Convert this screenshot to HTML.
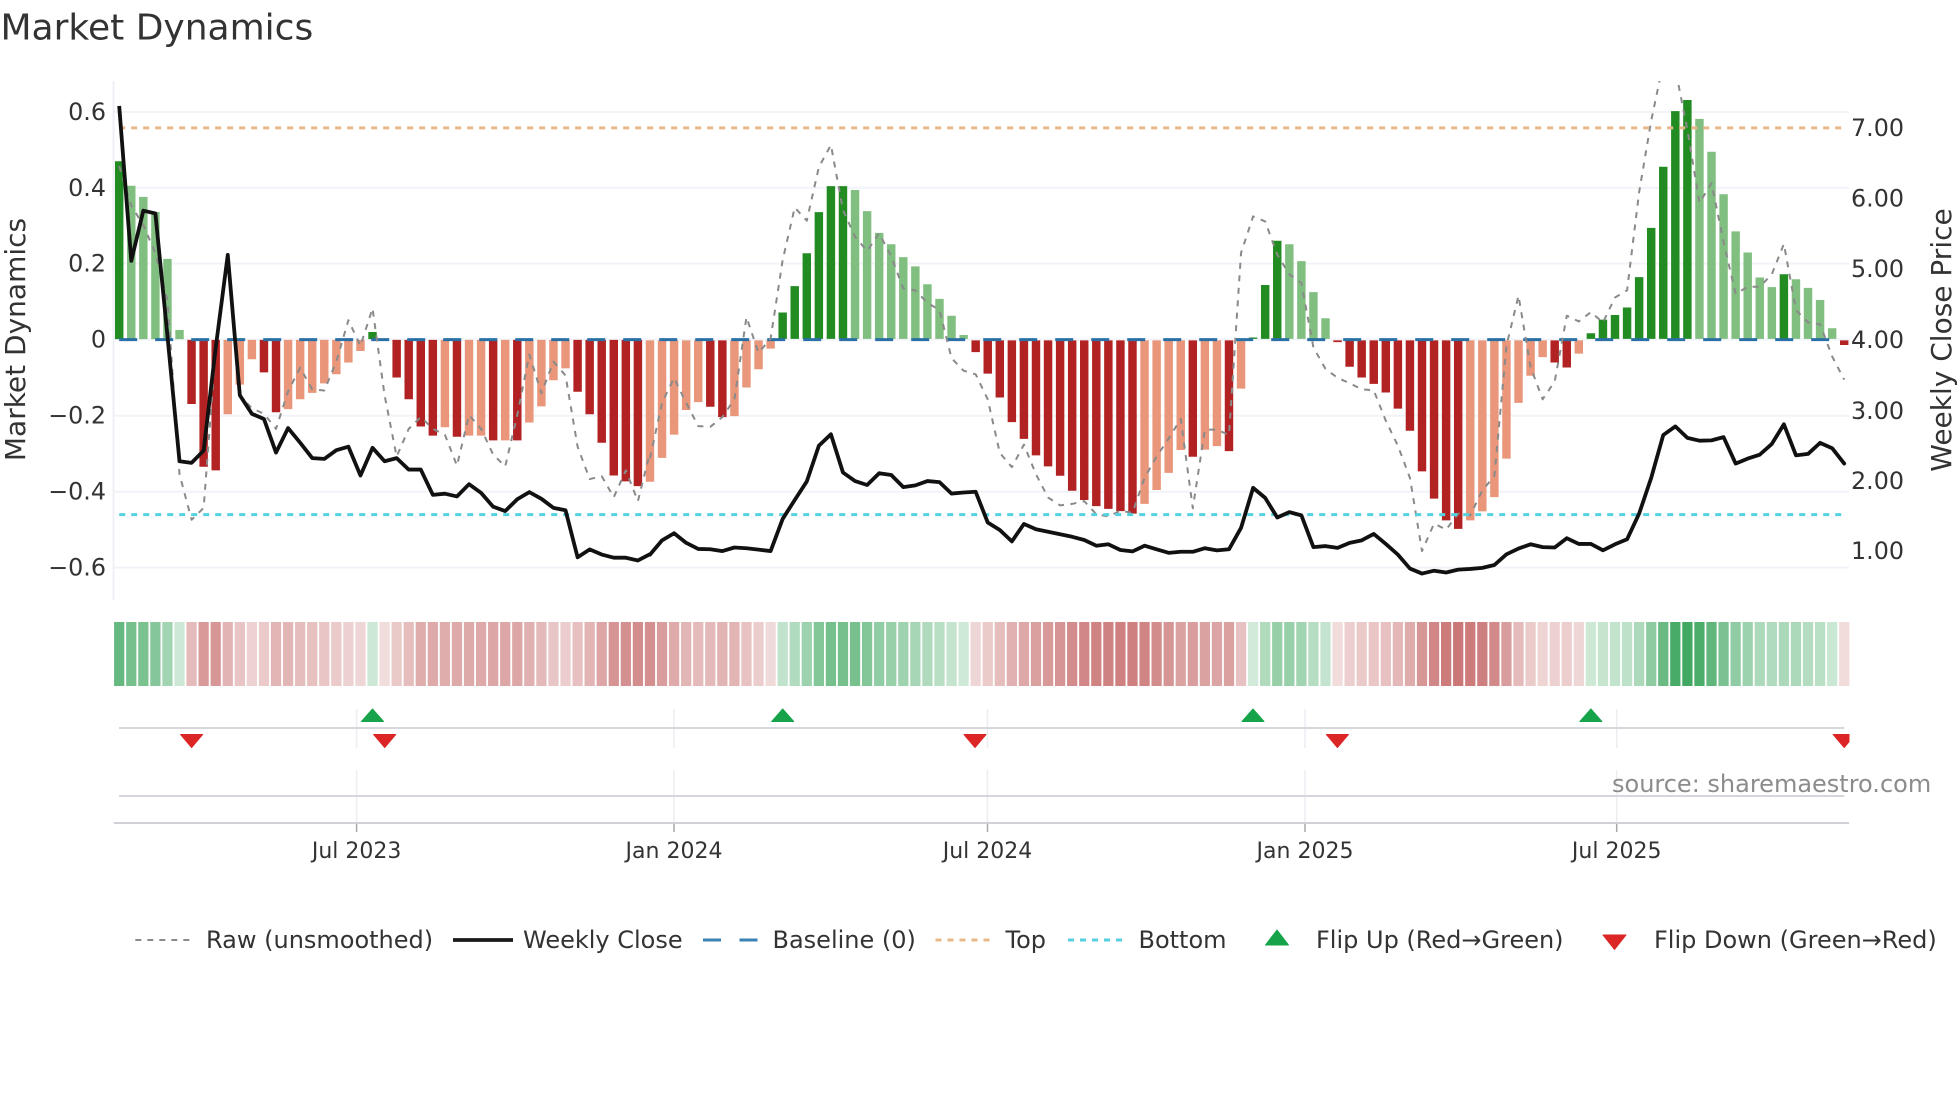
<!DOCTYPE html>
<html lang="en"><head><meta charset="utf-8"><title>Market Dynamics</title>
<style>
html,body{margin:0;padding:0;background:#fff}
svg{display:block}
text{font-family:"DejaVu Sans","Liberation Sans",sans-serif;fill:#333}
.ly{font-size:23.8px;text-anchor:end}
.ry{font-size:23.8px}
.xt{font-size:22px;text-anchor:middle}
.lg{font-size:24px}
.ns{vector-effect:non-scaling-stroke;fill:none;stroke-linejoin:round}
.g{stroke:#1a9641}.r{stroke:#a81c1c}
</style></head><body>
<svg width="1960" height="1102" viewBox="0 0 1960 1102" xmlns="http://www.w3.org/2000/svg">
<defs>
<clipPath id="c"><rect x="113" y="81" width="1737" height="520"/></clipPath>
<clipPath id="m"><rect x="113" y="700" width="1736.5" height="60"/></clipPath>
</defs>
<rect width="1960" height="1102" fill="#fff"/>
<text x="0.5" y="39.5" font-size="36">Market Dynamics</text>

<!-- grid -->
<g stroke="#f1f3f8" stroke-width="2">
<path d="M113 112H1849M113 187.7H1849M113 263.6H1849M113 339.5H1849M113 415.8H1849M113 491.7H1849M113 567.6H1849"/>
</g>
<path d="M113.5 81V600" stroke="#eef0f5" stroke-width="2"/>

<!-- bars -->
<g transform="translate(119.2 0) scale(12.063 .39526)" stroke-width=".7" fill="none">
<path stroke="#228b22" d="M0 858V408M21 858V840"/>
<path stroke="#81bf81" d="M1 858V470M2 858V498M3 858V536M4 858V655M5 858V835"/>
<path stroke="#b22222" d="M6 860V1022M7 860V1181M8 860V1190M12 860V942M13 860V1043M23 860V955M24 860V1010M25 860V1079M26 860V1102M28 860V1105M31 860V1114M33 860V1114M38 860V991M39 860V1048M40 860V1120M41 860V1203M42 860V1218M43 860V1230"/>
<path stroke="#e9967a" d="M9 860V1048M10 860V973M11 860V909M14 860V1035M15 860V1010M16 860V994M17 860V970M18 860V947M19 860V917M20 860V888M27 860V1081M29 860V1102M30 860V1102M32 860V1114M34 860V1069M35 860V1028M36 860V962M37 860V932"/>
</g>
<g transform="translate(119.2 60) scale(12.063 .35714)" stroke-width=".7" fill="none">
<path stroke="#e9967a" d="M44 785V1181M45 785V1114M46 785V1049M47 785V980M48 785V958M51 785V997M52 785V917M53 785V866M54 785V808M85 785V1243M86 785V1204M87 785V1156M88 785V1092M90 785V1091M91 785V1081M93 785V920M112 785V1289M113 785V1264M114 785V1224M115 785V1116M116 785V960M117 785V884M118 785V832M121 785V822"/>
<path stroke="#b22222" d="M49 785V971M50 785V1000M71 785V818M72 785V878M73 785V945M74 785V1014M75 785V1061M76 785V1107M77 785V1138M78 785V1164M79 785V1206M80 785V1232M81 785V1249M82 785V1257M83 785V1263M84 785V1270M89 785V1111M92 785V1095M101 785V790M102 785V859M103 785V889M104 785V907M105 785V931M106 785V976M107 785V1038M108 785V1152M109 785V1228M110 785V1289M111 785V1313M119 785V847M120 785V861M143 785V798"/>
<path stroke="#228b22" d="M55 781V707M56 781V633M57 781V541M58 781V426M59 781V353M60 781V353M94 781V777M95 781V630M96 781V506M122 781V765M123 781V727M124 781V714M125 781V693M126 781V608M127 781V470M128 781V299M129 781V143M130 781V112M138 781V600"/>
<path stroke="#81bf81" d="M61 781V364M62 781V423M63 781V484M64 781V516M65 781V552M66 781V578M67 781V628M68 781V669M69 781V716M70 781V770M97 781V516M98 781V563M99 781V650M100 781V723M131 781V165M132 781V257M133 781V376M134 781V480M135 781V539M136 781V609M137 781V636M139 781V614M140 781V638M141 781V672M142 781V751"/>
</g>

<!-- baseline -->
<path d="M119.2 339.6H1844" stroke="#2a70a5" stroke-width="3" stroke-dasharray="18 18" fill="none"/>

<g clip-path="url(#c)">
<!-- raw -->
<g stroke="#8a8a8a" stroke-width="2" stroke-dasharray="6 6.5">
<polyline class="ns" transform="translate(119.2 0) scale(12.063 .39526)" points="0,420 1,520 2,570 3,640 4,760 5,1200 6,1315 7,1285 8,880 9,645 10,1000 11,1033 12,1047 13,1085 14,990 15,930 16,985 17,988 18,915 19,810 20,875 21,780 22,1000 23,1155 24,1085 25,1055 26,1085 27,1100 28,1178 29,1050 30,1085 31,1150 32,1180 33,1050 34,897 35,995 36,915 37,950 38,1130 39,1212 40,1205 41,1258 42,1190 43,1268 44,1145"/>
<polyline class="ns" transform="translate(119.2 60) scale(12.063 .35714)" points="44,1115 45,960 46,890 47,960 48,1025 49,1027 50,1000 51,950 52,720 53,820 54,780 55,560 56,413 57,450 58,300 59,238 60,420 61,495 62,535 63,485 64,550 65,640 66,645 67,680 68,700 69,835 70,870 71,880 72,950 73,1100 74,1140 75,1077 76,1160 77,1225 78,1247 79,1243 80,1235 81,1272 82,1278 83,1262 84,1268 85,1170 86,1110 87,1060 88,1005 89,1255 90,1035 91,1035 92,1050 93,540 94,438 95,452 96,545 97,600 98,625 99,805 100,865 101,890 102,905 103,922 104,925 105,1010 106,1080 107,1170 108,1375 109,1298 110,1315 111,1270 112,1275 113,1205 114,1165 115,800 116,660 117,860 118,950 119,900 120,716 121,732 122,706 123,735 124,665 125,645 126,370 127,170 128,8 129,25 130,195 131,400 132,345 133,510 134,655 135,635 136,635 137,600 138,515 139,700 140,735 141,740 142,830 143,895"/>
</g>
<!-- top / bottom -->
<path d="M119.2 127.9H1844" stroke="#e9b88a" stroke-width="3" stroke-dasharray="6 6" fill="none"/>
<path d="M119.2 514.6H1844" stroke="#56d0e0" stroke-width="3" stroke-dasharray="6 6" fill="none"/>
<!-- weekly close -->
<g stroke="#111" stroke-width="3.8">
<polyline class="ns" transform="translate(119.2 0) scale(12.063 .39526)" points="0,268 1,660 2,533 3,540 4,850 5,1167 6,1171 7,1140 8,880 9,645 10,1000 11,1047 12,1060 13,1145 14,1083 15,1120 16,1159 17,1161 18,1139 19,1130 20,1203 21,1133 22,1167 23,1159 24,1188 25,1188 26,1252 27,1249 28,1256 29,1225 30,1247 31,1282 32,1293 33,1263 34,1245 35,1262 36,1285 37,1291 38,1410 39,1390 40,1403 41,1411 42,1411 43,1418 44,1402"/>
<polyline class="ns" stroke-linecap="round" transform="translate(119.2 60) scale(12.063 .35714)" points="44,1385 45,1345 46,1325 47,1352 48,1369 49,1370 50,1375 51,1365 52,1367 53,1371 54,1375 55,1285 56,1232 57,1180 58,1080 59,1048 60,1155 61,1179 62,1190 63,1157 64,1162 65,1196 66,1191 67,1179 68,1182 69,1214 70,1211 71,1209 72,1295 73,1316 74,1348 75,1299 76,1314 77,1321 78,1328 79,1335 80,1344 81,1360 82,1356 83,1372 84,1376 85,1360 86,1370 87,1380 88,1377 89,1377 90,1367 91,1373 92,1370 93,1310 94,1198 95,1226 96,1281 97,1266 98,1275 99,1364 100,1361 101,1366 102,1352 103,1345 104,1327 105,1355 106,1385 107,1424 108,1438 109,1430 110,1435 111,1427 112,1425 113,1422 114,1414 115,1384 116,1368 117,1356 118,1364 119,1365 120,1339 121,1355 122,1355 123,1373 124,1356 125,1342 126,1270 127,1170 128,1050 129,1026 130,1058 131,1066 132,1065 133,1056 134,1130 135,1116 136,1105 137,1075 138,1020 139,1107 140,1103 141,1072 142,1087 143,1130"/>
</g>
</g>

<!-- y ticks -->
<text class="ly" x="106" y="120">0.6</text>
<text class="ly" x="106" y="196">0.4</text>
<text class="ly" x="106" y="271.5">0.2</text>
<text class="ly" x="106" y="347.5">0</text>
<text class="ly" x="106" y="423.5">−0.2</text>
<text class="ly" x="106" y="499.5">−0.4</text>
<text class="ly" x="106" y="575.5">−0.6</text>
<text class="ry" x="1851" y="136">7.00</text>
<text class="ry" x="1851" y="206.5">6.00</text>
<text class="ry" x="1851" y="277">5.00</text>
<text class="ry" x="1851" y="348">4.00</text>
<text class="ry" x="1851" y="419">3.00</text>
<text class="ry" x="1851" y="489">2.00</text>
<text class="ry" x="1851" y="559">1.00</text>
<text transform="translate(25 339.5) rotate(-90)" text-anchor="middle" font-size="28">Market Dynamics</text>
<text transform="translate(1951 340) rotate(-90)" text-anchor="middle" font-size="28">Weekly Close Price</text>

<!-- heat strip -->
<g transform="translate(119.2 622) scale(12.063 64)" stroke-width=".85" fill="none">
<g class="g"><path d="M0 0V1" opacity=".67"/><path d="M1 0V1" opacity=".6"/><path d="M2 0V1" opacity=".575"/><path d="M3 0V1" opacity=".535"/><path d="M4 0V1" opacity=".41"/><path d="M5 0V1" opacity=".22"/></g>
<g class="r"><path d="M6 0V1" opacity=".3"/><path d="M7 0V1" opacity=".45"/><path d="M8 0V1" opacity=".46"/><path d="M9 0V1" opacity=".33"/><path d="M10 0V1" opacity=".26"/><path d="M11 0V1" opacity=".2"/><path d="M12 0V1" opacity=".23"/><path d="M13 0V1" opacity=".32"/><path d="M14 0V1" opacity=".32"/><path d="M15 0V1" opacity=".29"/><path d="M16 0V1" opacity=".28"/><path d="M17 0V1" opacity=".255"/><path d="M18 0V1" opacity=".23"/><path d="M19 0V1" opacity=".205"/><path d="M20 0V1" opacity=".18"/></g>
<g class="g"><path d="M21 0V1" opacity=".22"/></g>
<g class="r"><path d="M22 0V1" opacity=".15"/><path d="M23 0V1" opacity=".24"/><path d="M24 0V1" opacity=".29"/><path d="M25 0V1" opacity=".36"/><path d="M26 0V1" opacity=".38"/><path d="M27 0V1" opacity=".36"/><path d="M28 0V1" opacity=".38"/><path d="M29 0V1" opacity=".38"/><path d="M30 0V1" opacity=".38"/><path d="M31 0V1" opacity=".39"/><path d="M32 0V1" opacity=".39"/><path d="M33 0V1" opacity=".39"/><path d="M34 0V1" opacity=".35"/><path d="M35 0V1" opacity=".31"/><path d="M36 0V1" opacity=".25"/><path d="M37 0V1" opacity=".22"/><path d="M38 0V1" opacity=".275"/><path d="M39 0V1" opacity=".33"/><path d="M40 0V1" opacity=".395"/><path d="M41 0V1" opacity=".47"/><path d="M42 0V1" opacity=".49"/><path d="M43 0V1" opacity=".5"/><path d="M44 0V1" opacity=".49"/><path d="M45 0V1" opacity=".43"/><path d="M46 0V1" opacity=".375"/><path d="M47 0V1" opacity=".32"/><path d="M48 0V1" opacity=".3"/><path d="M49 0V1" opacity=".31"/><path d="M50 0V1" opacity=".335"/><path d="M51 0V1" opacity=".33"/><path d="M52 0V1" opacity=".265"/><path d="M53 0V1" opacity=".22"/><path d="M54 0V1" opacity=".17"/></g>
<g class="g"><path d="M55 0V1" opacity=".27"/><path d="M56 0V1" opacity=".34"/><path d="M57 0V1" opacity=".43"/><path d="M58 0V1" opacity=".54"/><path d="M59 0V1" opacity=".6"/><path d="M60 0V1" opacity=".6"/><path d="M61 0V1" opacity=".59"/><path d="M62 0V1" opacity=".54"/><path d="M63 0V1" opacity=".48"/><path d="M64 0V1" opacity=".45"/><path d="M65 0V1" opacity=".42"/><path d="M66 0V1" opacity=".39"/><path d="M67 0V1" opacity=".35"/><path d="M68 0V1" opacity=".31"/><path d="M69 0V1" opacity=".26"/><path d="M70 0V1" opacity=".21"/></g>
<g class="r"><path d="M71 0V1" opacity=".18"/><path d="M72 0V1" opacity=".23"/><path d="M73 0V1" opacity=".29"/><path d="M74 0V1" opacity=".345"/><path d="M75 0V1" opacity=".385"/><path d="M76 0V1" opacity=".425"/><path d="M77 0V1" opacity=".45"/><path d="M78 0V1" opacity=".47"/><path d="M79 0V1" opacity=".51"/><path d="M80 0V1" opacity=".53"/><path d="M81 0V1" opacity=".545"/><path d="M82 0V1" opacity=".55"/><path d="M83 0V1" opacity=".555"/><path d="M84 0V1" opacity=".56"/><path d="M85 0V1" opacity=".54"/><path d="M86 0V1" opacity=".505"/><path d="M87 0V1" opacity=".465"/><path d="M88 0V1" opacity=".41"/><path d="M89 0V1" opacity=".43"/><path d="M90 0V1" opacity=".41"/><path d="M91 0V1" opacity=".4"/><path d="M92 0V1" opacity=".415"/><path d="M93 0V1" opacity=".265"/></g>
<g class="g"><path d="M94 0V1" opacity=".2"/><path d="M95 0V1" opacity=".345"/><path d="M96 0V1" opacity=".46"/><path d="M97 0V1" opacity=".45"/><path d="M98 0V1" opacity=".41"/><path d="M99 0V1" opacity=".325"/><path d="M100 0V1" opacity=".255"/></g>
<g class="r"><path d="M101 0V1" opacity=".16"/><path d="M102 0V1" opacity=".215"/><path d="M103 0V1" opacity=".24"/><path d="M104 0V1" opacity=".255"/><path d="M105 0V1" opacity=".275"/><path d="M106 0V1" opacity=".315"/><path d="M107 0V1" opacity=".365"/><path d="M108 0V1" opacity=".46"/><path d="M109 0V1" opacity=".53"/><path d="M110 0V1" opacity=".58"/><path d="M111 0V1" opacity=".6"/><path d="M112 0V1" opacity=".58"/><path d="M113 0V1" opacity=".56"/><path d="M114 0V1" opacity=".52"/><path d="M115 0V1" opacity=".43"/><path d="M116 0V1" opacity=".3"/><path d="M117 0V1" opacity=".235"/><path d="M118 0V1" opacity=".19"/><path d="M119 0V1" opacity=".205"/><path d="M120 0V1" opacity=".215"/><path d="M121 0V1" opacity=".18"/></g>
<g class="g"><path d="M122 0V1" opacity=".22"/><path d="M123 0V1" opacity=".25"/><path d="M124 0V1" opacity=".265"/><path d="M125 0V1" opacity=".285"/><path d="M126 0V1" opacity=".365"/><path d="M127 0V1" opacity=".495"/><path d="M128 0V1" opacity=".655"/><path d="M129 0V1" opacity=".8"/><path d="M130 0V1" opacity=".83"/><path d="M131 0V1" opacity=".78"/><path d="M132 0V1" opacity=".695"/><path d="M133 0V1" opacity=".58"/><path d="M134 0V1" opacity=".485"/><path d="M135 0V1" opacity=".43"/><path d="M136 0V1" opacity=".365"/><path d="M137 0V1" opacity=".34"/><path d="M138 0V1" opacity=".37"/><path d="M139 0V1" opacity=".36"/><path d="M140 0V1" opacity=".335"/><path d="M141 0V1" opacity=".305"/><path d="M142 0V1" opacity=".23"/></g>
<g class="r"><path d="M143 0V1" opacity=".16"/></g>
</g>

<!-- lower panels -->
<g stroke="#eceef2" stroke-width="1.5">
<path d="M356.6 709V748M674 709V748M987.5 709V748M1305 709V748M1616.7 709V748"/>
<path d="M356.6 770V823M674 770V823M987.5 770V823M1305 770V823M1616.7 770V823"/>
</g>
<path d="M119 728H1844.4M119 796H1844.4" stroke="#d5d7dc" stroke-width="2"/>
<path d="M113.8 823H1849" stroke="#cfd1d6" stroke-width="2"/>
<path d="M356.6 824V832M674 824V832M987.5 824V832M1305 824V832M1616.7 824V832" stroke="#a9a9a9" stroke-width="1.5"/>

<g clip-path="url(#m)" stroke-linejoin="round" stroke-width="1">
<g fill="#16a34a" stroke="#16a34a">
<path d="M372.5 709L361.5 721.5H383.5Z"/>
<path d="M782.7 709L771.7 721.5H793.7Z"/>
<path d="M1253 709L1242 721.5H1264Z"/>
<path d="M1590.9 709L1579.9 721.5H1601.9Z"/>
</g>
<g fill="#dc2626" stroke="#dc2626">
<path d="M180.6 734.5H202.6L191.6 747.5Z"/>
<path d="M373.7 734.5H395.7L384.7 747.5Z"/>
<path d="M964 734.5H986L975 747.5Z"/>
<path d="M1326.4 734.5H1348.4L1337.4 747.5Z"/>
<path d="M1833.2 734.5H1855.2L1844.2 747.5Z"/>
</g>
</g>

<text class="xt" x="356.6" y="858">Jul 2023</text>
<text class="xt" x="674" y="858">Jan 2024</text>
<text class="xt" x="987.5" y="858">Jul 2024</text>
<text class="xt" x="1305" y="858">Jan 2025</text>
<text class="xt" x="1616.7" y="858">Jul 2025</text>
<text x="1612" y="792" font-size="24" style="fill:#8c8c8c">source: sharemaestro.com</text>

<!-- legend -->
<path d="M135.3 940H191" stroke="#8a8a8a" stroke-width="2" stroke-dasharray="6 6" fill="none"/>
<text class="lg" x="206" y="948">Raw (unsmoothed)</text>
<path d="M453 940H513" stroke="#1a1a1a" stroke-width="3.8" fill="none"/>
<text class="lg" x="523" y="948">Weekly Close</text>
<path d="M703 940H758" stroke="#3b82b5" stroke-width="3" stroke-dasharray="18 18.5" fill="none"/>
<text class="lg" x="772.5" y="948">Baseline (0)</text>
<path d="M935.5 940H991" stroke="#e9b88a" stroke-width="3" stroke-dasharray="6 6" fill="none"/>
<text class="lg" x="1005.5" y="948">Top</text>
<path d="M1068 940H1124" stroke="#56d0e0" stroke-width="3" stroke-dasharray="6 6" fill="none"/>
<text class="lg" x="1138.5" y="948">Bottom</text>
<path d="M1277 930L1265.5 945H1288.5Z" fill="#16a34a" stroke="#16a34a" stroke-linejoin="round"/>
<text class="lg" x="1316" y="948">Flip Up (Red→Green)</text>
<path d="M1603 935H1626L1614.5 949.5Z" fill="#dc2626" stroke="#dc2626" stroke-linejoin="round"/>
<text class="lg" x="1654" y="948">Flip Down (Green→Red)</text>
</svg>
</body></html>
